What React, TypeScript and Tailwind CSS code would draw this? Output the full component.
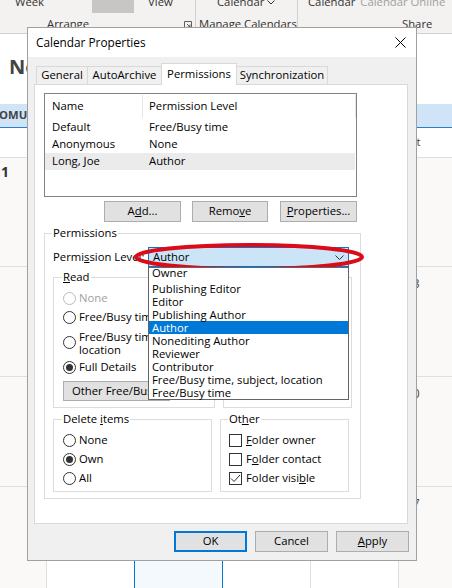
import React from "react";

const Radio = ({ checked, disabled }: { checked?: boolean; disabled?: boolean }) => (
  <span
    className={
      disabled
        ? "flex h-[13px] w-[13px] shrink-0 items-center justify-center rounded-full border border-[#bcbcbc] bg-white"
        : "flex h-[13px] w-[13px] shrink-0 items-center justify-center rounded-full border border-[#333333] bg-white"
    }
  >
    {checked && <span className="h-[7px] w-[7px] rounded-full bg-[#333333]" />}
  </span>
);

const Check = ({ checked }: { checked?: boolean }) => (
  <span className="flex h-[13px] w-[13px] shrink-0 items-center justify-center border border-[#333333] bg-white">
    {checked && (
      <svg width="11" height="11" viewBox="0 0 11 11">
        <path d="M1 5.5 L4 8.5 L10 2" fill="none" stroke="#333333" strokeWidth="1" />
      </svg>
    )}
  </span>
);

const Btn = ({ children, w }: { children: React.ReactNode; w: string }) => (
  <div className={`flex h-[21px] items-center justify-center border border-[#adadad] bg-[#e1e1e1] ${w}`}>{children}</div>
);

const RadioRow = ({ label, checked, disabled }: { label: React.ReactNode; checked?: boolean; disabled?: boolean }) => (
  <div className="flex h-[19px] items-center gap-[3px] whitespace-nowrap">
    <Radio checked={checked} disabled={disabled} />
    <span className={disabled ? "text-[#a0a0a0]" : ""}>{label}</span>
  </div>
);

const CheckRow = ({ label, checked }: { label: React.ReactNode; checked?: boolean }) => (
  <div className="flex h-[19px] items-center gap-[4px] whitespace-nowrap">
    <Check checked={checked} />
    <span>{label}</span>
  </div>
);

const levels = [
  "Publishing Editor",
  "Editor",
  "Publishing Author",
  "Author",
  "Nonediting Author",
  "Reviewer",
  "Contributor",
  "Free/Busy time, subject, location",
  "Free/Busy time",
];

export default function App() {
  return (
    <div className="relative h-[588px] w-[452px] overflow-hidden bg-white font-['Open_Sans',sans-serif] text-[11.3px] text-black">
      {/* Ribbon */}
      <div className="flex h-[34px] border-b border-[#d2d0ce] bg-[#f3f2f1] text-[#323130]">
        <div className="flex w-[196px] shrink-0 flex-col border-r border-[#d2d0ce]">
          <div className="flex h-[14px] items-start leading-[14px]">
            <span className="ml-[15px] -mt-[5px]">Week</span>
            <span className="ml-[48px] h-[13px] w-[42px] bg-[#c8c6c4]" />
            <span className="ml-[14px] -mt-[5px]">View</span>
          </div>
          <div className="mt-[3px] flex h-[14px] items-center leading-[14px]">
            <span className="ml-[47px]">Arrange</span>
            <svg className="ml-[95px] mt-[2px]" width="8" height="8" viewBox="0 0 8 8">
              <path d="M0.5 7.5 V0.5 H7.5 V7.5 Z" fill="none" stroke="#605e5c" strokeWidth="1" />
              <path d="M3 3 L6 6 M6 3.5 V6 H3.5" fill="none" stroke="#605e5c" strokeWidth="1" />
            </svg>
          </div>
        </div>
        <div className="flex w-[102px] shrink-0 flex-col border-r border-[#d2d0ce]">
          <div className="flex h-[14px] items-start leading-[14px]">
            <span className="ml-[21px] -mt-[5px] flex items-center gap-[3px]">
              Calendar
              <svg width="8" height="5" viewBox="0 0 8 5">
                <path d="M0.5 0.5 L4 4 L7.5 0.5" fill="none" stroke="#323130" strokeWidth="1" />
              </svg>
            </span>
          </div>
          <div className="mt-[3px] flex h-[14px] items-center leading-[14px]">
            <span className="ml-[3px] whitespace-nowrap">Manage Calendars</span>
          </div>
        </div>
        <div className="flex flex-1 flex-col">
          <div className="flex h-[14px] items-start whitespace-nowrap leading-[14px]">
            <span className="ml-[10px] -mt-[5px]">Calendar</span>
            <span className="ml-[5px] -mt-[5px] text-[#a19f9d]">Calendar Online</span>
          </div>
          <div className="mt-[3px] flex h-[14px] items-center leading-[14px]">
            <span className="ml-[104px]">Share</span>
          </div>
        </div>
      </div>

      {/* Calendar background */}
      <div className="h-[70px] pl-[9px] pt-[19px] text-[20px] font-bold leading-[28px] text-[#444444]">November</div>
      <div className="flex h-[24px] items-center border-b border-[#2b7cd3] bg-[#cfe4f7] font-bold text-[#444444]">
        <span className="-ml-[1px]">OMU</span>
      </div>
      <div className="grid h-[30px] grid-cols-[46px_88px_88px_88px_88px_1fr] border-b border-[#e1dfdd]">
        <div />
        <div />
        <div />
        <div />
        <div />
        <div className="flex items-center pl-[6px] text-[#444444]">Sat</div>
      </div>
      {[
        { l: "1", r: "6", h: "h-[109px]" },
        { l: "", r: "13", h: "h-[110px]" },
        { l: "", r: "20", h: "h-[110px]" },
        { l: "", r: "27", h: "h-[110px]" },
      ].map((row, i) => (
        <div key={i} className={`grid grid-cols-[46px_88px_88px_88px_88px_1fr] border-b border-[#e1dfdd] ${row.h}`}>
          <div className="bg-[#faf9f8] pl-[1px] pt-[6px] text-[14px] font-bold leading-[16px] text-[#323130]">{row.l}</div>
          <div className="border-l border-[#e1dfdd]" />
          <div className="border-l border-[#0078d4] bg-[#f4f9fd]" />
          <div className="border-l border-[#0078d4]" />
          <div className="border-l border-[#e1dfdd]" />
          <div className="border-l border-[#e1dfdd] bg-[#faf9f8] pl-[7px] pt-[10px] text-[12px] leading-[14px] text-[#444444]">{row.r}</div>
        </div>
      ))}
      <div className="grid h-[110px] grid-cols-[46px_88px_88px_88px_88px_1fr]">
        <div className="bg-[#faf9f8]" />
        <div className="border-l border-[#e1dfdd]" />
        <div className="border-l border-[#0078d4] bg-[#f4f9fd]" />
        <div className="border-l border-[#0078d4]" />
        <div className="border-l border-[#e1dfdd]" />
        <div className="border-l border-[#e1dfdd]" />
      </div>

      {/* Dialog */}
      <div className="absolute left-[27px] top-[27px] flex h-[534px] w-[390px] flex-col border border-[#a0a0a0] bg-[#f0f0f0]">
        <div className="flex h-[29px] shrink-0 items-center justify-between bg-white pl-[8px] pr-[10px]">
          <span className="text-[11.8px]">Calendar Properties</span>
          <svg width="11" height="11" viewBox="0 0 11 11">
            <path d="M0.5 0.5 L10.5 10.5 M10.5 0.5 L0.5 10.5" stroke="#000000" strokeWidth="1" />
          </svg>
        </div>
        <div className="pl-[6px] pr-[8px] pt-[6px]">
          {/* Tabs */}
          <div className="flex h-[21px] items-end pl-[2px]">
            <div className="flex h-[18px] w-[52px] items-center justify-center border border-b-0 border-[#d9d9d9] bg-[#f0f0f0]">General</div>
            <div className="-ml-px flex h-[18px] w-[75px] items-center justify-center border border-b-0 border-[#d9d9d9] bg-[#f0f0f0]">AutoArchive</div>
            <div className="relative z-10 -mb-px -ml-px flex h-[22px] w-[76px] items-start justify-center border border-b-0 border-[#d9d9d9] bg-white pt-[2px]">Permissions</div>
            <div className="-ml-px flex h-[18px] w-[92px] items-center justify-center border border-b-0 border-[#d9d9d9] bg-[#f0f0f0]">Synchronization</div>
          </div>
          {/* Panel */}
          <div className="h-[440px] border border-[#d9d9d9] bg-white pl-[9px] pt-[8px]">
            {/* List */}
            <div className="h-[104px] w-[313px] border border-[#828282] bg-white">
              <div className="flex h-[25px]">
                <div className="my-[1px] flex w-[98px] items-center border-r border-[#e5e5e5] pl-[7px]">Name</div>
                <div className="my-[1px] flex w-[213px] items-center border-r border-[#e5e5e5] pl-[6px]">Permission Level</div>
              </div>
              {[
                ["Default", "Free/Busy time", false],
                ["Anonymous", "None", false],
                ["Long, Joe", "Author", true],
              ].map(([n, p, sel]) => (
                <div key={n as string} className={sel ? "flex h-[17px] w-[310px] items-center bg-[#ebebeb]" : "flex h-[17px] w-[310px] items-center"}>
                  <span className="w-[98px] pl-[7px]">{n}</span>
                  <span className="pl-[6px]">{p}</span>
                </div>
              ))}
            </div>
            {/* Buttons */}
            <div className="mt-[4px] flex pl-[60px]">
              <Btn w="w-[77px]">
                <span>
                  A<u>d</u>d...
                </span>
              </Btn>
              <div className="ml-[11px]">
                <Btn w="w-[76px]">
                  <span>
                    Remo<u>v</u>e
                  </span>
                </Btn>
              </div>
              <div className="ml-[12px]">
                <Btn w="w-[77px]">
                  <span>
                    <u>P</u>roperties...
                  </span>
                </Btn>
              </div>
            </div>
            {/* Permissions group */}
            <fieldset className="mt-[4px] w-[314px] border border-[#dcdcdc] px-[8px] pb-[6px]">
              <legend className="-ml-[1px] px-[1px] leading-[14px]">Permissions</legend>
              <div className="mt-[7px] flex h-[20px] items-center">
                <span className="w-[95px] whitespace-nowrap">
                  Permi<u>s</u>sion Level:
                </span>
                <div className="relative flex h-[20px] w-[201px] items-center justify-between border border-[#0078d7] bg-[#cce4f7] pl-[4px] pr-[4px]">
                  <span>Author</span>
                  <svg width="9" height="5" viewBox="0 0 9 5">
                    <path d="M0.5 0.5 L4.5 4.5 L8.5 0.5" fill="none" stroke="#333333" strokeWidth="1" />
                  </svg>
                  <div className="absolute -left-px top-[19px] z-20 w-[201px] border border-[#646464] bg-white leading-[13px]">
                    <div className="h-[14px] overflow-hidden pl-[3px]">
                      <div className="-mt-[2px] leading-[13px]">Owner</div>
                    </div>
                    {levels.map((l) => (
                      <div
                        key={l}
                        className={l === "Author" ? "h-[13px] whitespace-nowrap bg-[#0078d7] pl-[3px] text-white" : "h-[13px] whitespace-nowrap pl-[3px]"}
                      >
                        {l}
                      </div>
                    ))}
                  </div>
                </div>
              </div>
              <div className="mt-[3px] flex gap-[8px]">
                <fieldset className="h-[138px] w-[159px] border border-[#dcdcdc] px-[9px]">
                  <legend className="-ml-[1px] px-[1px] leading-[14px]">
                    <u>R</u>ead
                  </legend>
                  <div className="pt-[5px]">
                    <RadioRow label="None" disabled />
                    <RadioRow label="Free/Busy time" />
                    <div className="flex h-[31px] items-center gap-[3px] whitespace-nowrap">
                      <Radio />
                      <span className="leading-[13px]">
                        Free/Busy time, subject,
                        <br />
                        location
                      </span>
                    </div>
                    <RadioRow label="Full Details" checked />
                    <div className="mt-[4px] flex h-[20px] w-[107px] items-center overflow-hidden whitespace-nowrap border border-[#adadad] bg-[#e1e1e1] pl-[8px]">
                      Other Free/Busy...
                    </div>
                  </div>
                </fieldset>
                <fieldset className="h-[138px] w-[129px] border border-[#dcdcdc] px-[8px]">
                  <legend className="-ml-[1px] px-[1px] leading-[14px]">Write</legend>
                </fieldset>
              </div>
              <div className="mt-[4px] flex gap-[8px]">
                <fieldset className="h-[80px] w-[159px] border border-[#dcdcdc] px-[9px]">
                  <legend className="-ml-[1px] px-[1px] leading-[14px]">
                    Delete <u>i</u>tems
                  </legend>
                  <div className="pt-[5px]">
                    <RadioRow label="None" />
                    <RadioRow label="Own" checked />
                    <RadioRow label="All" />
                  </div>
                </fieldset>
                <fieldset className="h-[80px] w-[129px] border border-[#dcdcdc] px-[8px]">
                  <legend className="-ml-[1px] px-[1px] leading-[14px]">
                    Ot<u>h</u>er
                  </legend>
                  <div className="pt-[5px]">
                    <CheckRow
                      label={
                        <>
                          <u>F</u>older owner
                        </>
                      }
                    />
                    <CheckRow
                      label={
                        <>
                          F<u>o</u>lder contact
                        </>
                      }
                    />
                    <CheckRow
                      checked
                      label={
                        <>
                          Folder visi<u>b</u>le
                        </>
                      }
                    />
                  </div>
                </fieldset>
              </div>
            </fieldset>
          </div>
        </div>
        {/* Footer */}
        <div className="mt-[7px] flex justify-end gap-[8px] pr-[7px]">
          <div className="flex h-[21px] w-[73px] items-center justify-center border-2 border-[#0078d7] bg-[#e1e1e1]">OK</div>
          <Btn w="w-[73px]">Cancel</Btn>
          <Btn w="w-[73px]">
            <span>
              <u>A</u>pply
            </span>
          </Btn>
        </div>
      </div>

      {/* Red annotation ellipse */}
      <svg className="pointer-events-none absolute left-[130px] top-[239px]" width="240" height="36" viewBox="0 0 240 36">
        <ellipse cx="119" cy="18" rx="113" ry="12" fill="none" stroke="#dd0a18" strokeWidth="4" />
      </svg>
    </div>
  );
}
